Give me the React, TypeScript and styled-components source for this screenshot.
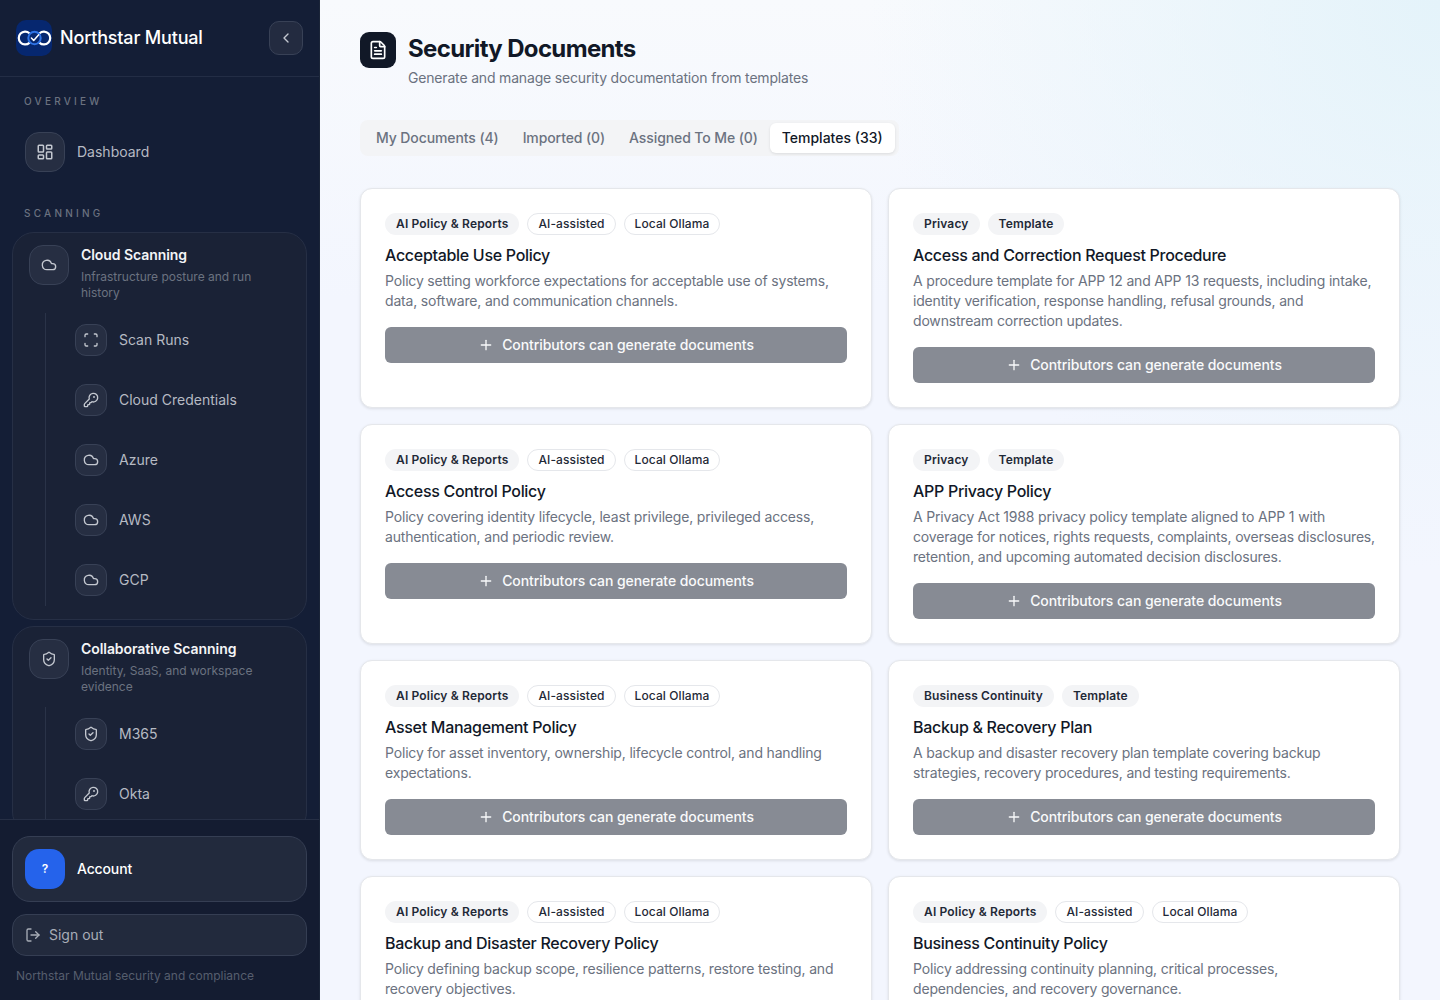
import { ChevronLeft, Cloud, FileText, KeyRound, LayoutDashboard, LogOut, Plus, Scan, ShieldCheck } from "lucide-react";
import type { ReactNode } from "react";
import styled, { createGlobalStyle } from "styled-components";

const GlobalStyle = createGlobalStyle`
  * {
    box-sizing: border-box;
  }
  html, body {
    margin: 0;
    height: 100%;
    overflow: hidden;
    font-family: Inter, "Liberation Sans", sans-serif;
  }
`;

const Page = styled.div`
  display: flex;
  height: 1000px;
  overflow: hidden;
`;

const Sidebar = styled.aside`
  width: 320px;
  flex-shrink: 0;
  display: flex;
  flex-direction: column;
  background: #141e36;
  border-right: 1px solid #1b2538;
`;

const Brand = styled.div`
  height: 77px;
  flex-shrink: 0;
  display: flex;
  align-items: center;
  gap: 8px;
  padding: 0 16px;
  border-bottom: 1px solid #232d45;
`;

const BrandName = styled.span`
  flex: 1;
  font-size: 18px;
  line-height: 28px;
  font-weight: 500;
  letter-spacing: -0.01em;
  color: #fff;
`;

const Collapse = styled.button`
  width: 34px;
  height: 34px;
  display: flex;
  align-items: center;
  justify-content: center;
  padding: 0;
  border-radius: 10px;
  border: 1px solid #384156;
  background: #232b40;
  color: #c4c8d0;
`;

const Nav = styled.nav`
  flex: 1;
  min-height: 0;
  overflow: hidden;
  padding: 16px 12px 0;
  display: flex;
  flex-direction: column;
`;

const SectionLabel = styled.div`
  height: 16px;
  margin-bottom: 11px;
  padding-left: 12px;
  font-size: 10px;
  line-height: 16px;
  font-weight: 500;
  letter-spacing: 0.325em;
  color: #6b7280;
`;

const TopItem = styled.div`
  display: flex;
  align-items: center;
  gap: 12px;
  padding: 12px 13px;
  margin-bottom: 21px;
  font-size: 14px;
  line-height: 20px;
  color: #b6bac3;
`;

const Tile = styled.span<{ $small?: boolean }>`
  flex-shrink: 0;
  display: flex;
  align-items: center;
  justify-content: center;
  width: ${(p) => (p.$small ? "32px" : "40px")};
  height: ${(p) => (p.$small ? "32px" : "40px")};
  border-radius: ${(p) => (p.$small ? "11px" : "14px")};
  border: 1px solid #384156;
  background: #262e42;
  color: #c4c8d0;
`;

const Group = styled.section`
  flex-shrink: 0;
  margin-bottom: 6px;
  padding: 12px 16px 13px;
  border-radius: 22px;
  border: 1px solid #262f45;
  background: #1a2236;
`;

const GroupHead = styled.div`
  display: flex;
  gap: 12px;
`;

const GroupTitle = styled.div`
  font-size: 14px;
  line-height: 20px;
  font-weight: 600;
  letter-spacing: -0.005em;
  color: #f4f5f7;
`;

const GroupDesc = styled.div`
  margin-top: 4px;
  font-size: 12px;
  line-height: 16px;
  color: #6b7280;
`;

const SubNav = styled.div`
  margin: 12px 0 0 16px;
  padding: 11px 0 10px 29px;
  display: flex;
  flex-direction: column;
  gap: 28px;
  border-left: 1px solid #2a3348;
`;

const SubItem = styled.div`
  display: flex;
  align-items: center;
  gap: 12px;
  font-size: 14px;
  line-height: 20px;
  color: #b6bac3;
`;

const SidebarFooter = styled.div`
  flex-shrink: 0;
  padding: 16px 12px;
  display: flex;
  flex-direction: column;
  gap: 12px;
  background: #141c31;
  border-top: 1px solid #262f45;
`;

const AccountCard = styled.div`
  height: 66px;
  display: flex;
  align-items: center;
  gap: 12px;
  padding: 0 12px;
  border-radius: 18px;
  border: 1px solid #353e53;
  background: #222a3d;
  font-size: 14px;
  line-height: 20px;
  font-weight: 500;
  letter-spacing: -0.01em;
  color: #fff;
`;

const Avatar = styled.span`
  width: 40px;
  height: 40px;
  display: flex;
  align-items: center;
  justify-content: center;
  border-radius: 14px;
  background: #2563eb;
  font-size: 12px;
  line-height: 16px;
  font-weight: 600;
  color: #fff;
`;

const SignOut = styled.button`
  height: 42px;
  display: flex;
  align-items: center;
  gap: 8px;
  padding: 0 12px;
  border-radius: 14px;
  border: 1px solid #353e53;
  background: #222a3d;
  font: inherit;
  font-size: 14px;
  line-height: 20px;
  color: #a8adb7;
`;

const FooterNote = styled.div`
  padding-left: 4px;
  font-size: 12px;
  line-height: 16px;
  color: #565e6e;
`;

const Main = styled.main`
  flex: 1;
  min-width: 0;
  overflow: hidden;
  padding: 32px 40px;
  background:
    radial-gradient(circle at 100% 0%, #e4f3fa 0%, rgba(228, 243, 250, 0) 38%),
    linear-gradient(180deg, #f8fafd 0%, #f3f6fe 30%, #f3f6fe 100%);
`;

const Header = styled.header`
  display: flex;
  gap: 12px;
  margin-bottom: 32px;
`;

const HeaderIcon = styled.span`
  width: 36px;
  height: 36px;
  flex-shrink: 0;
  display: flex;
  align-items: center;
  justify-content: center;
  border-radius: 9px;
  background: #111827;
  color: #fff;
`;

const Title = styled.h1`
  margin: 0;
  font-size: 24px;
  line-height: 34px;
  font-weight: 700;
  letter-spacing: -0.027em;
  color: #111827;
`;

const Subtitle = styled.p`
  margin: 2px 0 0;
  font-size: 14px;
  line-height: 20px;
  letter-spacing: -0.0125em;
  color: #6b7280;
`;

const TabList = styled.div`
  display: inline-flex;
  height: 36px;
  padding: 3px 4px;
  margin-bottom: 32px;
  border-radius: 8px;
  background: #f3f4f6;
`;

const Tab = styled.div<{ $active?: boolean }>`
  display: flex;
  align-items: center;
  padding: 0 12px;
  border-radius: 6px;
  font-size: 14px;
  line-height: 20px;
  font-weight: 500;
  letter-spacing: ${(p) => (p.$active ? "0" : "-0.1px")};
  color: ${(p) => (p.$active ? "#111827" : "#6b7280")};
  background: ${(p) => (p.$active ? "#fff" : "transparent")};
  box-shadow: ${(p) => (p.$active ? "0 1px 3px rgba(0, 0, 0, 0.1)" : "none")};
`;

const CardGrid = styled.div`
  display: grid;
  grid-template-columns: 1fr 1fr;
  gap: 16px;
`;

const Card = styled.article`
  padding: 24px;
  border-radius: 12px;
  border: 1px solid #e5e7eb;
  background: #fff;
  box-shadow: 0 1px 3px rgba(0, 0, 0, 0.1);
`;

const Pills = styled.div`
  display: flex;
  gap: 8px;
  margin-bottom: 8px;
`;

const Pill = styled.span<{ $outline?: boolean }>`
  height: 22px;
  display: flex;
  align-items: center;
  padding: 0 ${(p) => (p.$outline ? "10px" : "11px")};
  border-radius: 11px;
  font-size: 12px;
  line-height: 16px;
  font-weight: ${(p) => (p.$outline ? 500 : 600)};
  letter-spacing: ${(p) => (p.$outline ? "0.1px" : "0.16px")};
  color: #1f2937;
  background: ${(p) => (p.$outline ? "#fff" : "#f3f4f6")};
  border: ${(p) => (p.$outline ? "1px solid #e5e7eb" : "none")};
`;

const CardTitle = styled.h3`
  margin: 0;
  font-size: 16px;
  line-height: 24px;
  font-weight: 500;
  letter-spacing: -0.3px;
  color: #111827;
`;

const CardDesc = styled.p`
  margin: 4px 0 16px;
  font-size: 14px;
  line-height: 20px;
  letter-spacing: -0.0125em;
  color: #6b7280;
`;

const GenerateButton = styled.button`
  width: 100%;
  height: 36px;
  display: flex;
  align-items: center;
  justify-content: center;
  gap: 8px;
  border: none;
  border-radius: 6px;
  background: #878b94;
  font: inherit;
  font-size: 14px;
  line-height: 20px;
  font-weight: 500;
  letter-spacing: -0.08px;
  color: #f9fafb;
`;

function Logo() {
  return (
    <svg width="36" height="36" viewBox="0 0 36 36" fill="none">
      <rect width="36" height="36" rx="10" fill="#06276f" />
      <path d="M13.4 13.2a6.4 6.4 0 1 0 0 9.6" stroke="#fff" strokeWidth="2.2" strokeLinecap="round" />
      <path d="M23.6 13.2a6.4 6.4 0 1 1 0 9.6" stroke="#fff" strokeWidth="2.2" strokeLinecap="round" />
      <circle cx="18.5" cy="18" r="6.2" stroke="#2f74e6" strokeWidth="2" />
      <path d="M15.4 18l2.3 2.4 5-5.6" stroke="#fff" strokeWidth="1.5" strokeLinecap="round" strokeLinejoin="round" />
    </svg>
  );
}

type NavGroup = {
  title: string;
  desc: ReactNode;
  icon: ReactNode;
  items: { label: string; icon: ReactNode }[];
};

const groups: NavGroup[] = [
  {
    title: "Cloud Scanning",
    desc: "Infrastructure posture and run history",
    icon: <Cloud size={16} />,
    items: [
      { label: "Scan Runs", icon: <Scan size={16} /> },
      { label: "Cloud Credentials", icon: <KeyRound size={16} /> },
      { label: "Azure", icon: <Cloud size={16} /> },
      { label: "AWS", icon: <Cloud size={16} /> },
      { label: "GCP", icon: <Cloud size={16} /> },
    ],
  },
  {
    title: "Collaborative Scanning",
    desc: "Identity, SaaS, and workspace evidence",
    icon: <ShieldCheck size={16} />,
    items: [
      { label: "M365", icon: <ShieldCheck size={16} /> },
      { label: "Okta", icon: <KeyRound size={16} /> },
    ],
  },
];

const aiTags = ["AI Policy & Reports", "AI-assisted", "Local Ollama"];

const templates = [
  {
    tags: aiTags,
    title: "Acceptable Use Policy",
    desc: "Policy setting workforce expectations for acceptable use of systems, data, software, and communication channels.",
  },
  {
    tags: ["Privacy", "Template"],
    title: "Access and Correction Request Procedure",
    desc: "A procedure template for APP 12 and APP 13 requests, including intake, identity verification, response handling, refusal grounds, and downstream correction updates.",
  },
  {
    tags: aiTags,
    title: "Access Control Policy",
    desc: "Policy covering identity lifecycle, least privilege, privileged access, authentication, and periodic review.",
  },
  {
    tags: ["Privacy", "Template"],
    title: "APP Privacy Policy",
    desc: "A Privacy Act 1988 privacy policy template aligned to APP 1 with coverage for notices, rights requests, complaints, overseas disclosures, retention, and upcoming automated decision disclosures.",
  },
  {
    tags: aiTags,
    title: "Asset Management Policy",
    desc: "Policy for asset inventory, ownership, lifecycle control, and handling expectations.",
  },
  {
    tags: ["Business Continuity", "Template"],
    title: "Backup & Recovery Plan",
    desc: "A backup and disaster recovery plan template covering backup strategies, recovery procedures, and testing requirements.",
  },
  {
    tags: aiTags,
    title: "Backup and Disaster Recovery Policy",
    desc: "Policy defining backup scope, resilience patterns, restore testing, and recovery objectives.",
  },
  {
    tags: aiTags,
    title: "Business Continuity Policy",
    desc: "Policy addressing continuity planning, critical processes, dependencies, and recovery governance.",
  },
];

const tabs = ["My Documents (4)", "Imported (0)", "Assigned To Me (0)", "Templates (33)"];

export default function App() {
  return (
    <Page>
      <GlobalStyle />
      <Sidebar>
        <Brand>
          <Logo />
          <BrandName>Northstar Mutual</BrandName>
          <Collapse>
            <ChevronLeft size={16} />
          </Collapse>
        </Brand>
        <Nav>
          <SectionLabel>OVERVIEW</SectionLabel>
          <TopItem>
            <Tile>
              <LayoutDashboard size={18} />
            </Tile>
            Dashboard
          </TopItem>
          <SectionLabel>SCANNING</SectionLabel>
          {groups.map((group) => (
            <Group key={group.title}>
              <GroupHead>
                <Tile>{group.icon}</Tile>
                <div>
                  <GroupTitle>{group.title}</GroupTitle>
                  <GroupDesc>{group.desc}</GroupDesc>
                </div>
              </GroupHead>
              <SubNav>
                {group.items.map((item) => (
                  <SubItem key={item.label}>
                    <Tile $small>{item.icon}</Tile>
                    {item.label}
                  </SubItem>
                ))}
              </SubNav>
            </Group>
          ))}
        </Nav>
        <SidebarFooter>
          <AccountCard>
            <Avatar>?</Avatar>
            Account
          </AccountCard>
          <SignOut>
            <LogOut size={16} />
            Sign out
          </SignOut>
          <FooterNote>Northstar Mutual security and compliance</FooterNote>
        </SidebarFooter>
      </Sidebar>
      <Main>
        <Header>
          <HeaderIcon>
            <FileText size={20} />
          </HeaderIcon>
          <div>
            <Title>Security Documents</Title>
            <Subtitle>Generate and manage security documentation from templates</Subtitle>
          </div>
        </Header>
        <TabList>
          {tabs.map((tab, i) => (
            <Tab key={tab} $active={i === tabs.length - 1}>
              {tab}
            </Tab>
          ))}
        </TabList>
        <CardGrid>
          {templates.map((t) => (
            <Card key={t.title}>
              <Pills>
                {t.tags.map((tag, i) => (
                  <Pill key={tag} $outline={i > 0 && t.tags.length > 2}>
                    {tag}
                  </Pill>
                ))}
              </Pills>
              <CardTitle>{t.title}</CardTitle>
              <CardDesc>{t.desc}</CardDesc>
              <GenerateButton>
                <Plus size={16} />
                Contributors can generate documents
              </GenerateButton>
            </Card>
          ))}
        </CardGrid>
      </Main>
    </Page>
  );
}
